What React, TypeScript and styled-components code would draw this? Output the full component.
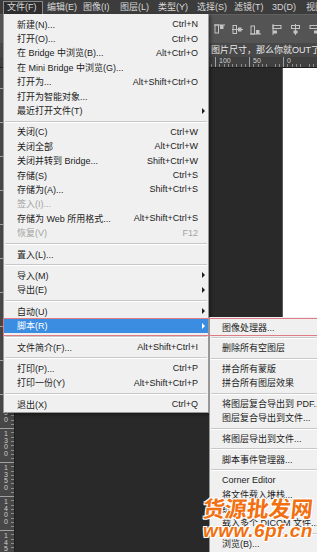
import React from "react";
import styled, { createGlobalStyle, css } from "styled-components";

const GlobalStyle = createGlobalStyle`
  html, body { margin: 0; padding: 0; }
  body {
    background: #282828;
    font-family: "Liberation Sans", "Noto Sans CJK SC", sans-serif;
  }
  #root { width: 317px; height: 552px; }
`;

const Screen = styled.div`
  position: relative;
  width: 317px;
  height: 552px;
  overflow: hidden;
  display: flex;
  flex-direction: column;
  background: #282828;
`;

const MenuBar = styled.div`
  flex: none;
  height: 14px;
  box-sizing: border-box;
  padding: 1px 0 0 3px;
  display: flex;
  align-items: flex-start;
  background: #3c3c3c;
`;

const BarItem = styled.div<{ $w: number; $active?: boolean }>`
  flex: none;
  width: ${(p) => p.$w}px;
  height: 13px;
  box-sizing: border-box;
  padding-left: 4px;
  font-size: 9px;
  line-height: 12px;
  color: #d8d8d8;
  white-space: nowrap;
  overflow: hidden;
  ${(p) =>
    p.$active &&
    css`
      border: 1px solid #8a8a8a;
      border-bottom: none;
      background: #2f2f2f;
      padding-left: 3px;
      line-height: 11px;
    `}
`;

const Toolbar = styled.div`
  flex: none;
  height: 29px;
  box-sizing: border-box;
  background: #545454;
  border-top: 1px solid #606060;
  display: flex;
  align-items: center;
  padding-left: 214px;
  gap: 11px;
`;

const IconGroup = styled.div`
  display: flex;
  gap: 7px;
`;

const TabBar = styled.div`
  flex: none;
  height: 14px;
  background: #484848;
  padding-left: 211px;
  font-size: 9px;
  line-height: 14px;
  color: #e8e8e8;
  white-space: nowrap;
  overflow: hidden;
`;

const TopRuler = styled.div`
  flex: none;
  height: 11px;
  box-sizing: border-box;
  background: #404040;
  display: flex;
  padding-left: 11px;
  overflow: hidden;
  border-bottom: 1px solid #1e1e1e;
`;

const HMark = styled.div`
  flex: none;
  width: 34px;
  height: 100%;
  box-sizing: border-box;
  border-left: 1px solid #a0a0a0;
  padding-left: 3px;
  font-size: 7px;
  line-height: 8px;
  color: #d0d0d0;
  background: repeating-linear-gradient(
      to right,
      transparent 0 3.3px,
      #8c8c8c 3.3px 4.3px
    )
    bottom / 100% 3px no-repeat;
`;

const Workspace = styled.div`
  flex: 1;
  min-height: 0;
  display: flex;
`;

const SideRuler = styled.div`
  flex: none;
  width: 15px;
  box-sizing: border-box;
  background: #474747;
  border-right: 1px solid #1e1e1e;
  display: flex;
  flex-direction: column;
  padding-top: 20px;
  overflow: hidden;
`;

const VMark = styled.div`
  flex: none;
  height: 34px;
  box-sizing: border-box;
  border-top: 1px solid #a0a0a0;
  padding: 2px 0 0 4px;
  display: flex;
  flex-direction: column;
  font-size: 7px;
  line-height: 6.5px;
  color: #d0d0d0;
  background: repeating-linear-gradient(
      to bottom,
      transparent 0 3.3px,
      #8c8c8c 3.3px 4.3px
    )
    right / 3px 100% no-repeat;
`;

const Pasteboard = styled.div`
  flex: 1;
  background: #292929;
`;

const Doc = styled.div`
  flex: none;
  width: 34px;
  background: #ffffff;
  border-left: 1px solid #5a5a5a;
`;

const MainMenu = styled.div`
  position: absolute;
  left: 3px;
  top: 14px;
  width: 206px;
  box-sizing: border-box;
  padding: 3px 0 1px;
  background: #f0f0f0;
  border: 1px solid #979797;
  border-top: none;
  box-shadow: 2px 2px 3px rgba(0, 0, 0, 0.35);
`;

const SubMenu = styled.div`
  position: absolute;
  left: 209px;
  top: 317px;
  bottom: 0;
  width: 130px;
  box-sizing: border-box;
  padding-top: 3px;
  background: #f0f0f0;
  border-left: 1px solid #979797;
`;

const Row = styled.div<{
  $h: number;
  $pad: number;
  $active?: boolean;
  $disabled?: boolean;
}>`
  height: ${(p) => p.$h}px;
  display: grid;
  grid-template-columns: 1fr auto 10px;
  align-items: center;
  padding-left: ${(p) => p.$pad}px;
  font-size: 9px;
  white-space: nowrap;
  color: ${(p) => (p.$disabled ? "#a3a3a3" : "#1c1c1c")};
  ${(p) =>
    p.$active &&
    css`
      background: #3b8de2;
      color: #ffffff;
    `}
`;

const Shortcut = styled.span`
  justify-self: end;
`;

const Arrow = styled.span<{ $light?: boolean }>`
  justify-self: center;
  width: 0;
  height: 0;
  border-left: 3px solid ${(p) => (p.$light ? "#ffffff" : "#1e1e1e")};
  border-top: 3px solid transparent;
  border-bottom: 3px solid transparent;
`;

const Sep = styled.div<{ $h: number }>`
  height: ${(p) => p.$h}px;
  display: flex;
  align-items: center;
  padding: 0 1px;
  &::after {
    content: "";
    flex: 1;
    height: 1px;
    background: #c8c8c8;
    box-shadow: 0 1px 0 #ffffff;
  }
`;

const Callout = styled.div`
  position: absolute;
  left: 3px;
  top: 318px;
  width: 330px;
  height: 18px;
  box-sizing: border-box;
  border: 1px solid #e07b85;
  pointer-events: none;
`;

const Watermark = styled.div`
  position: absolute;
  left: 203px;
  top: 494px;
  color: #f2700f;
  font-weight: 700;
  pointer-events: none;
  text-shadow: -1px -1px 0 #fff, 1px -1px 0 #fff, -1px 1px 0 #fff,
    1px 1px 0 #fff, 0 0 2px #fff;
`;

const WmTitle = styled.div`
  font-family: "Noto Sans CJK SC", sans-serif;
  font-size: 22px;
  line-height: 26px;
  transform: skewX(-6deg);
`;

const WmUrl = styled.div`
  font-family: "Liberation Sans", sans-serif;
  font-style: italic;
  font-size: 19px;
  line-height: 22px;
  letter-spacing: 0.5px;
`;

type Item =
  | { sep: true }
  | {
      sep?: false;
      label: string;
      shortcut?: string;
      arrow?: boolean;
      active?: boolean;
      disabled?: boolean;
    };

const S: Item = { sep: true };

const mainItems: Item[] = [
  { label: "新建(N)...", shortcut: "Ctrl+N" },
  { label: "打开(O)...", shortcut: "Ctrl+O" },
  { label: "在 Bridge 中浏览(B)...", shortcut: "Alt+Ctrl+O" },
  { label: "在 Mini Bridge 中浏览(G)..." },
  { label: "打开为...", shortcut: "Alt+Shift+Ctrl+O" },
  { label: "打开为智能对象..." },
  { label: "最近打开文件(T)", arrow: true },
  S,
  { label: "关闭(C)", shortcut: "Ctrl+W" },
  { label: "关闭全部", shortcut: "Alt+Ctrl+W" },
  { label: "关闭并转到 Bridge...", shortcut: "Shift+Ctrl+W" },
  { label: "存储(S)", shortcut: "Ctrl+S" },
  { label: "存储为(A)...", shortcut: "Shift+Ctrl+S" },
  { label: "签入(I)...", disabled: true },
  { label: "存储为 Web 所用格式...", shortcut: "Alt+Shift+Ctrl+S" },
  { label: "恢复(V)", shortcut: "F12", disabled: true },
  S,
  { label: "置入(L)..." },
  S,
  { label: "导入(M)", arrow: true },
  { label: "导出(E)", arrow: true },
  S,
  { label: "自动(U)", arrow: true },
  { label: "脚本(R)", arrow: true, active: true },
  S,
  { label: "文件简介(F)...", shortcut: "Alt+Shift+Ctrl+I" },
  S,
  { label: "打印(P)...", shortcut: "Ctrl+P" },
  { label: "打印一份(Y)", shortcut: "Alt+Shift+Ctrl+P" },
  S,
  { label: "退出(X)", shortcut: "Ctrl+Q" },
];

const subItems: Item[] = [
  { label: "图像处理器..." },
  S,
  { label: "删除所有空图层" },
  S,
  { label: "拼合所有蒙版" },
  { label: "拼合所有图层效果" },
  S,
  { label: "将图层复合导出到 PDF..." },
  { label: "图层复合导出到文件..." },
  S,
  { label: "将图层导出到文件..." },
  S,
  { label: "脚本事件管理器..." },
  S,
  { label: "Corner Editor" },
  { label: "将文件载入堆栈..." },
  { label: "统计..." },
  { label: "载入多个 DICOM 文件..." },
  S,
  { label: "浏览(B)..." },
];

const barItems: { label: string; w: number; active?: boolean }[] = [
  { label: "文件(F)", w: 40, active: true },
  { label: "编辑(E)", w: 36 },
  { label: "图像(I)", w: 37 },
  { label: "图层(L)", w: 38 },
  { label: "类型(Y)", w: 39 },
  { label: "选择(S)", w: 37 },
  { label: "滤镜(T)", w: 38 },
  { label: "3D(D)", w: 34 },
  { label: "视图(V)", w: 40 },
];

const MenuList: React.FC<{
  items: Item[];
  rowH: number;
  sepH: number;
  pad: number;
}> = ({ items, rowH, sepH, pad }) => (
  <>
    {items.map((it, i) =>
      it.sep ? (
        <Sep key={i} $h={sepH} />
      ) : (
        <Row
          key={i}
          $h={rowH}
          $pad={pad}
          $active={it.active}
          $disabled={it.disabled}
        >
          <span>{it.label}</span>
          <Shortcut>{it.shortcut ?? ""}</Shortcut>
          {it.arrow ? <Arrow $light={it.active} /> : <span />}
        </Row>
      )
    )}
  </>
);

const ic = "#c4c4c4";

const AlignV: React.FC<{ pos: "top" | "mid" | "bot" }> = ({ pos }) => {
  const lineY = pos === "top" ? 1 : pos === "mid" ? 5.5 : 10;
  const tall = { y: pos === "top" ? 1 : pos === "mid" ? 1.5 : 2 };
  const short = { y: pos === "top" ? 1 : pos === "mid" ? 3.5 : 6 };
  return (
    <svg width="11" height="11" viewBox="0 0 11 11">
      <rect x="1" y={tall.y} width="3.5" height="8" fill="none" stroke={ic} strokeWidth="1" />
      <rect x="6" y={short.y} width="3.5" height="4" fill={ic} />
      <line x1="0" x2="11" y1={lineY} y2={lineY} stroke={ic} strokeWidth="1" />
    </svg>
  );
};

const AlignH: React.FC<{ pos: "l" | "c" | "r" }> = ({ pos }) => {
  const lineX = pos === "l" ? 1 : pos === "c" ? 5.5 : 10;
  const x1 = pos === "l" ? 1 : pos === "c" ? 1.5 : 2;
  const x2 = pos === "l" ? 1 : pos === "c" ? 3.5 : 6;
  return (
    <svg width="11" height="11" viewBox="0 0 11 11">
      <rect x={x1} y="1.5" width="8" height="3" fill="none" stroke={ic} strokeWidth="1" />
      <rect x={x2} y="6.5" width="4" height="3" fill={ic} />
      <line x1={lineX} x2={lineX} y1="0" y2="11" stroke={ic} strokeWidth="1" />
    </svg>
  );
};

const hMarks = [400, 350, 300, 250, 200, 150, 100, 50, 0, 50];
const vMarks = [800, 850, 900, 950, 1000, 1050, 1100, 1150, 1200, 1250, 1300, 1350, 1400, 1450];

export default function App() {
  return (
    <>
      <GlobalStyle />
      <Screen>
        <MenuBar>
          {barItems.map((b) => (
            <BarItem key={b.label} $w={b.w} $active={b.active}>
              {b.label}
            </BarItem>
          ))}
        </MenuBar>
        <Toolbar>
          <IconGroup>
            <AlignV pos="top" />
            <AlignV pos="mid" />
            <AlignV pos="bot" />
          </IconGroup>
          <IconGroup>
            <AlignH pos="l" />
            <AlignH pos="c" />
            <AlignH pos="r" />
          </IconGroup>
        </Toolbar>
        <TabBar>图片尺寸，那么你就OUT了，</TabBar>
        <TopRuler>
          {hMarks.map((m, i) => (
            <HMark key={i}>{m}</HMark>
          ))}
        </TopRuler>
        <Workspace>
          <SideRuler>
            {vMarks.map((m) => (
              <VMark key={m}>
                {String(m)
                  .split("")
                  .map((d, j) => (
                    <span key={j}>{d}</span>
                  ))}
              </VMark>
            ))}
          </SideRuler>
          <Pasteboard />
          <Doc />
        </Workspace>

        <MainMenu>
          <MenuList items={mainItems} rowH={14.4} sepH={7} pad={13} />
        </MainMenu>
        <SubMenu>
          <MenuList items={subItems} rowH={14.2} sepH={6.6} pad={12} />
        </SubMenu>
        <Callout />
        <Watermark>
          <WmTitle>货源批发网</WmTitle>
          <WmUrl>www.6pf.cn</WmUrl>
        </Watermark>
      </Screen>
    </>
  );
}
